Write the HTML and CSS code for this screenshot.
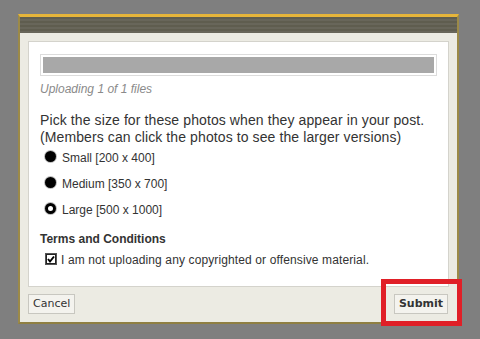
FILE: index.html
```html
<!DOCTYPE html>
<html>
<head>
<meta charset="utf-8">
<link rel="stylesheet" href="styles.css">
</head>
<body>
<div class="dialog">
  <div class="header"></div>
  <div class="frame">
    <div class="panel">
      <div class="progress"><div class="bar"></div></div>
      <div class="status">Uploading 1 of 1 files</div>
      <p class="intro">Pick the size for these photos when they appear in your post.<br>(Members can click the photos to see the larger versions)</p>
      <div class="options">
        <label class="opt"><span class="radio full"></span>Small [200 x 400]</label>
        <label class="opt"><span class="radio full"></span>Medium [350 x 700]</label>
        <label class="opt"><span class="radio ring"></span>Large [500 x 1000]</label>
      </div>
      <div class="terms-title">Terms and Conditions</div>
      <label class="terms"><svg class="check" width="12" height="12" viewBox="0 0 12 12"><rect x="0.5" y="0.5" width="11" height="11" fill="#fff" stroke="#555"/><rect x="1.5" y="1.5" width="9" height="9" fill="#fff" stroke="#222"/><path d="M3 6 L5 8.5 L9 3.5" fill="none" stroke="#000" stroke-width="2"/></svg>I am not uploading any copyrighted or offensive material.</label>
    </div>
    <div class="footer">
      <button class="btn">Cancel</button>
      <button class="btn primary">Submit</button>
    </div>
  </div>
</div>
<div class="highlight"></div>
</body>
</html>
```
FILE: styles.css
```css
html, body {
  margin: 0;
  padding: 0;
  background: #7f7f7f;
  width: 480px;
  height: 339px;
  overflow: hidden;
  font-family: "Liberation Sans", Arial, sans-serif;
}
.dialog {
  margin: 14px 0 0 18px;
  width: 441px;
  box-sizing: border-box;
  border-top: 3px solid #e6b53a;
  border-left: 2px solid #9c8a48;
  border-right: 2px solid #9c8a48;
  border-bottom: 2px solid #8f7f42;
  background: #ecebe3;
}
.header {
  height: 16px;
  background: repeating-linear-gradient(to bottom, #5f5d4f 0, #5f5d4f 2px, #68665a 2px, #68665a 4px);
}
.frame {
  padding: 8px 8px 0 8px;
}
.panel {
  background: #fff;
  border: 1px solid #d4d3cc;
  height: 246px;
  box-sizing: border-box;
  padding: 12px 11px 0 11px;
}
.progress {
  border: 1px solid #dcdcdc;
  padding: 2px;
  height: 22px;
  box-sizing: border-box;
}
.bar {
  background: #a8a8a8;
  height: 100%;
}
.status {
  margin-top: 6px;
  font-size: 12px;
  font-style: italic;
  color: #8a8a8a;
}
.intro {
  margin: 16px 0 0 0;
  font-size: 14px;
  line-height: 17px;
  color: #333;
  letter-spacing: 0.1px;
}
.options {
  margin-top: 5px;
  display: flex;
  flex-direction: column;
  gap: 12px;
  padding-left: 5px;
}
.opt {
  display: flex;
  align-items: center;
  font-size: 12px;
  color: #333;
  height: 14px;
}
.radio {
  width: 11px;
  height: 11px;
  border-radius: 50%;
  box-sizing: border-box;
  margin-right: 6px;
  flex: none;
  position: relative;
  top: -2px;
}
.radio.full {
  background: #000;
  box-shadow: 0 0 0 1px #bbb;
}
.radio.ring {
  background: #fff;
  border: 3px solid #000;
  box-shadow: 0 0 0 1px #bbb;
}
.terms-title {
  margin-top: 15px;
  font-size: 12px;
  font-weight: bold;
  color: #333;
}
.terms {
  display: flex;
  align-items: center;
  font-size: 12px;
  color: #333;
  margin-top: 7px;
  padding-left: 5px;
  letter-spacing: 0.12px;
}
.check {
  margin-right: 4px;
  flex: none;
  position: relative;
  top: -1px;
}
.footer {
  display: flex;
  justify-content: space-between;
  padding: 7px 1px 8px 0;
}
.btn {
  font-family: "DejaVu Sans", Verdana, sans-serif;
  font-size: 11px;
  color: #333;
  background: #f4f3ee;
  border: 1px solid #c8c7c0;
  height: 20px;
  padding: 0 4px;
  margin: 0;
  line-height: 18px;
}
.btn.primary {
  font-weight: bold;
  padding: 0 4px;
}
.highlight {
  position: absolute;
  left: 381px;
  top: 279px;
  width: 81px;
  height: 47px;
  box-sizing: border-box;
  border: 5px solid #e01f27;
}
```
